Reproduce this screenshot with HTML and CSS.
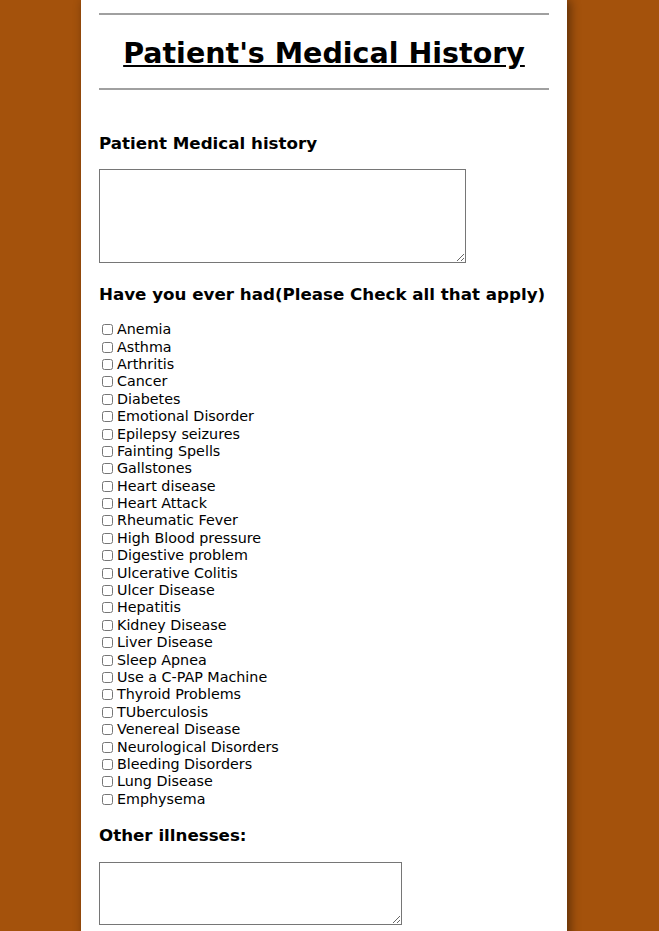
FILE: index.html
```html
<!DOCTYPE html>
<html>
<head>
<meta charset="utf-8">
<title>Patient's Medical History</title>
<link rel="stylesheet" href="styles.css">
</head>
<body>
<div class="page">
  <hr class="rule">
  <h1 class="title">Patient's Medical History</h1>
  <hr class="rule">
  <h3 class="label first">Patient Medical history</h3>
  <textarea class="area big"></textarea>
  <h3 class="label">Have you ever had(Please Check all that apply)</h3>
  <div class="checks">
    <label class="item"><input type="checkbox">Anemia</label>
    <label class="item"><input type="checkbox">Asthma</label>
    <label class="item"><input type="checkbox">Arthritis</label>
    <label class="item"><input type="checkbox">Cancer</label>
    <label class="item"><input type="checkbox">Diabetes</label>
    <label class="item"><input type="checkbox">Emotional Disorder</label>
    <label class="item"><input type="checkbox">Epilepsy seizures</label>
    <label class="item"><input type="checkbox">Fainting Spells</label>
    <label class="item"><input type="checkbox">Gallstones</label>
    <label class="item"><input type="checkbox">Heart disease</label>
    <label class="item"><input type="checkbox">Heart Attack</label>
    <label class="item"><input type="checkbox">Rheumatic Fever</label>
    <label class="item"><input type="checkbox">High Blood pressure</label>
    <label class="item"><input type="checkbox">Digestive problem</label>
    <label class="item"><input type="checkbox">Ulcerative Colitis</label>
    <label class="item"><input type="checkbox">Ulcer Disease</label>
    <label class="item"><input type="checkbox">Hepatitis</label>
    <label class="item"><input type="checkbox">Kidney Disease</label>
    <label class="item"><input type="checkbox">Liver Disease</label>
    <label class="item"><input type="checkbox">Sleep Apnea</label>
    <label class="item"><input type="checkbox">Use a C-PAP Machine</label>
    <label class="item"><input type="checkbox">Thyroid Problems</label>
    <label class="item"><input type="checkbox">TUberculosis</label>
    <label class="item"><input type="checkbox">Venereal Disease</label>
    <label class="item"><input type="checkbox">Neurological Disorders</label>
    <label class="item"><input type="checkbox">Bleeding Disorders</label>
    <label class="item"><input type="checkbox">Lung Disease</label>
    <label class="item"><input type="checkbox">Emphysema</label>
  </div>
  <h3 class="label last">Other illnesses:</h3>
  <textarea class="area small"></textarea>
</div>
</body>
</html>
```

FILE: styles.css
```css
html, body {
  margin: 0;
  padding: 0;
}
body {
  background: #a4520c;
  font-family: "DejaVu Sans", Verdana, sans-serif;
  color: #000;
  padding-right: 11px;
}
.page {
  width: 486px;
  margin: 0 auto;
  background: #fff;
  padding: 13px 18px 40px;
  min-height: 931px;
  box-sizing: border-box;
  box-shadow: 3px 0 10px rgba(0, 0, 0, 0.45);
}
.rule {
  margin: 0;
  border: 0;
  border-top: 2px solid #a0a0a0;
}
.title {
  margin: 0;
  padding: 22px 0 18px;
  text-align: center;
  font-size: 28.5px;
  font-weight: bold;
  text-decoration: underline;
}
.label {
  margin: 0;
  font-size: 16.7px;
  font-weight: bold;
  white-space: nowrap;
  padding: 21px 0 15px;
}
.label.first {
  padding-top: 43px;
  padding-bottom: 16px;
}
.label.last {
  padding-top: 17px;
  padding-bottom: 17px;
}
.area {
  display: block;
  margin: 0;
  border: 1px solid #767676;
  padding: 2px;
  box-sizing: border-box;
}
.area.big {
  width: 367px;
  height: 94px;
}
.area.small {
  width: 303px;
  height: 63px;
}
.checks {
  display: flex;
  flex-direction: column;
  padding-top: 2px;
}
.item {
  display: flex;
  align-items: center;
  font-size: 14.3px;
  height: 17.4px;
  line-height: 17px;
}
.item input {
  width: 11px;
  height: 11px;
  margin: 0 4px 0 3px;
}
```
